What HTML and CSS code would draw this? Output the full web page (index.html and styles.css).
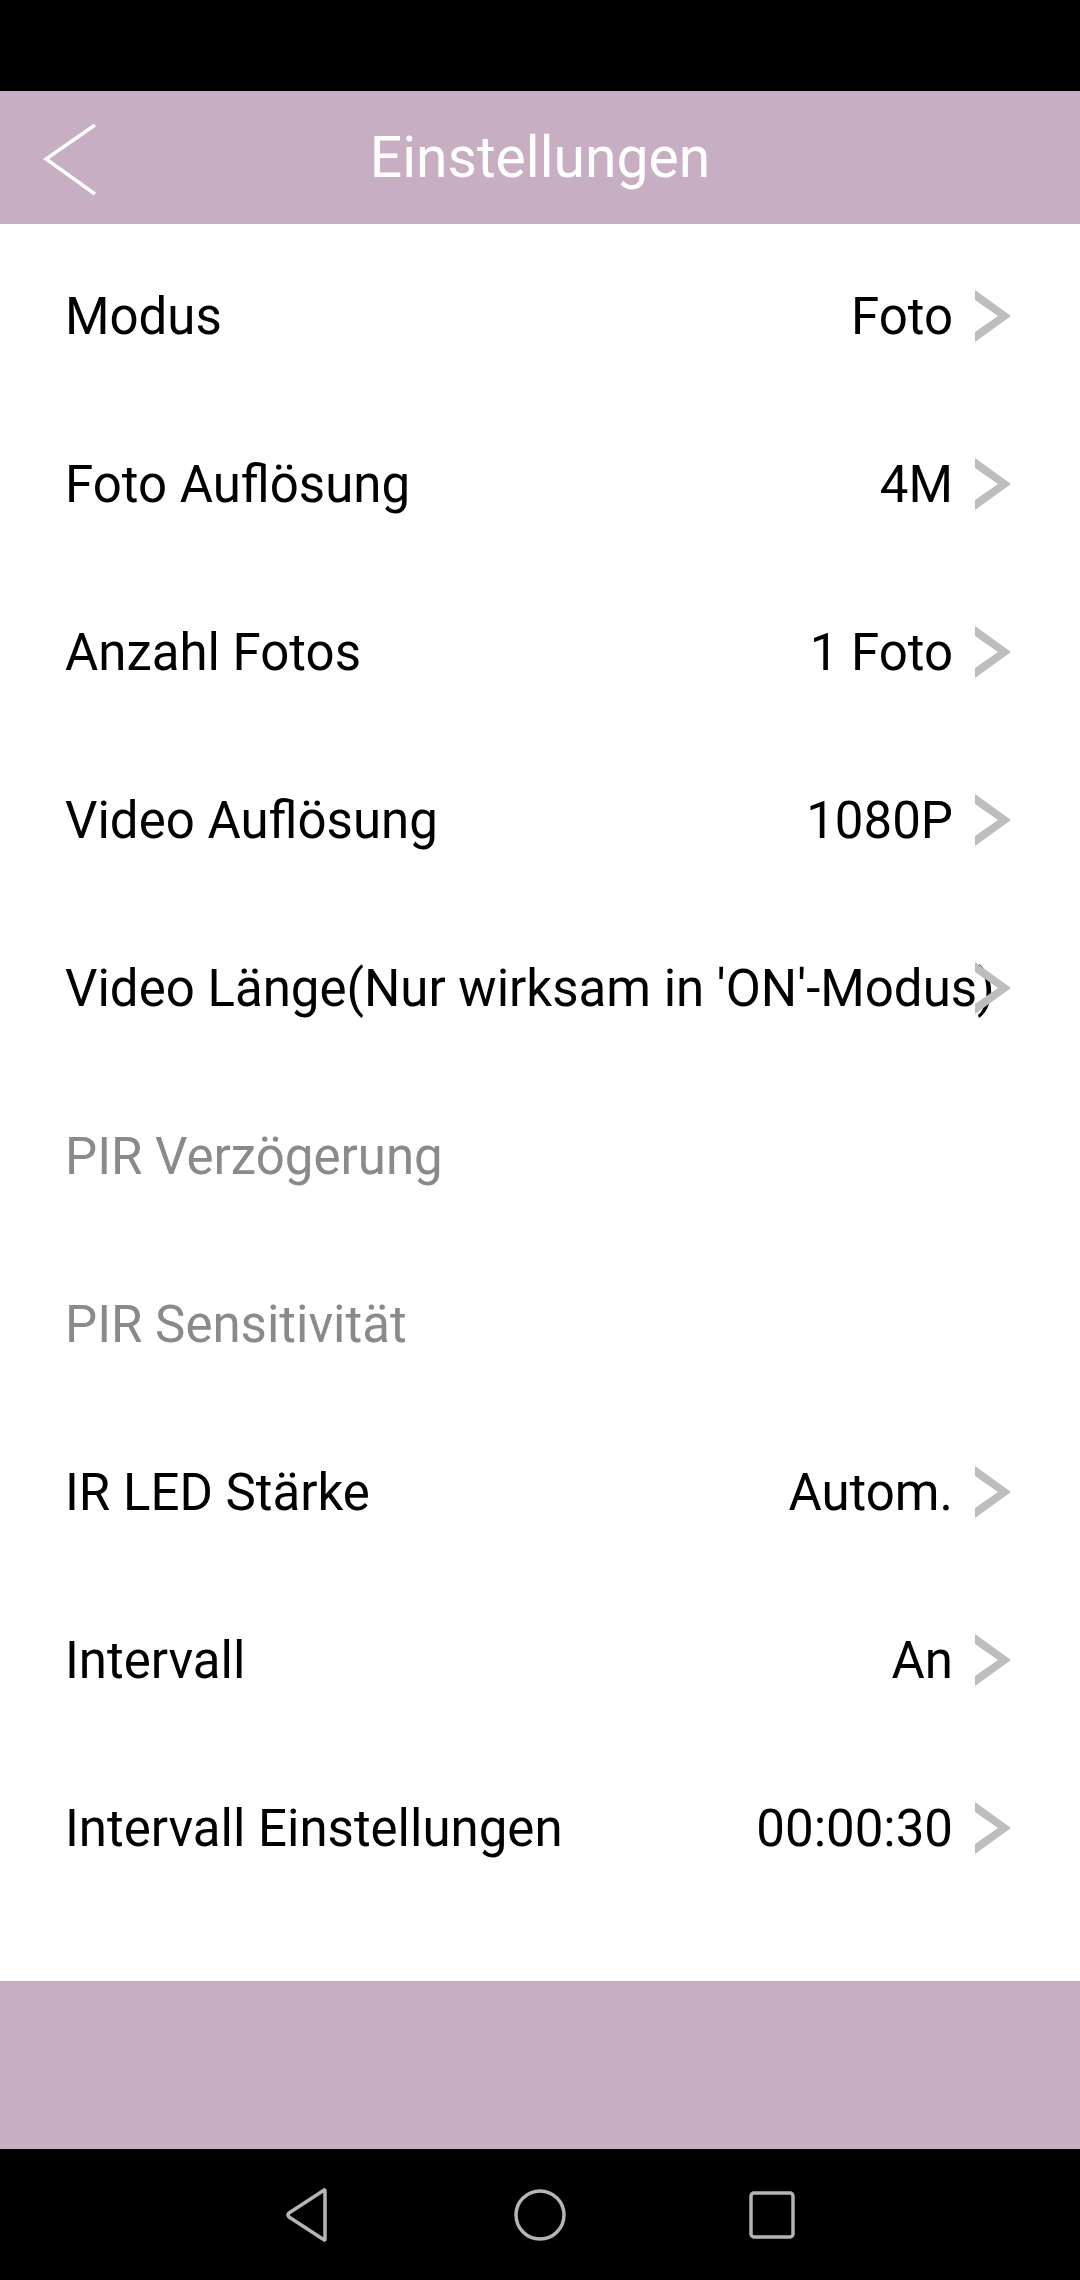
FILE: index.html
```html
<!DOCTYPE html>
<html lang="de">
<head>
    <meta charset="UTF-8">
    <meta name="viewport" content="width=device-width, initial-scale=1.0">
    <title>Einstellungen</title>
    <link rel="stylesheet" href="styles.css">
</head>
<body>
    <div class="status-bar"></div>

    <div class="app-bar">
        <svg class="back" width="60" height="80" viewBox="0 0 60 80">
            <polyline points="53,3 4,37 53,72" fill="none" stroke="#fff" stroke-width="3.5"/>
        </svg>
        <h1 class="title">Einstellungen</h1>
    </div>

    <div class="settings">
        <div class="row">
            <span class="label">Modus</span>
            <span class="value">Foto</span>
            <svg class="chevron" viewBox="0 0 36 52"><polygon points="0,0 36,26 0,52 0,42 23,26 0,10"/></svg>
        </div>
        <div class="row">
            <span class="label">Foto Auflösung</span>
            <span class="value">4M</span>
            <svg class="chevron" viewBox="0 0 36 52"><polygon points="0,0 36,26 0,52 0,42 23,26 0,10"/></svg>
        </div>
        <div class="row">
            <span class="label">Anzahl Fotos</span>
            <span class="value">1 Foto</span>
            <svg class="chevron" viewBox="0 0 36 52"><polygon points="0,0 36,26 0,52 0,42 23,26 0,10"/></svg>
        </div>
        <div class="row">
            <span class="label">Video Auflösung</span>
            <span class="value">1080P</span>
            <svg class="chevron" viewBox="0 0 36 52"><polygon points="0,0 36,26 0,52 0,42 23,26 0,10"/></svg>
        </div>
        <div class="row">
            <span class="label">Video Länge(Nur wirksam in 'ON'-Modus)</span>
            <span class="value"></span>
            <svg class="chevron" viewBox="0 0 36 52"><polygon points="0,0 36,26 0,52 0,42 23,26 0,10"/></svg>
        </div>
        <div class="row disabled">
            <span class="label">PIR Verzögerung</span>
        </div>
        <div class="row disabled">
            <span class="label">PIR Sensitivität</span>
        </div>
        <div class="row">
            <span class="label">IR LED Stärke</span>
            <span class="value">Autom.</span>
            <svg class="chevron" viewBox="0 0 36 52"><polygon points="0,0 36,26 0,52 0,42 23,26 0,10"/></svg>
        </div>
        <div class="row">
            <span class="label">Intervall</span>
            <span class="value">An</span>
            <svg class="chevron" viewBox="0 0 36 52"><polygon points="0,0 36,26 0,52 0,42 23,26 0,10"/></svg>
        </div>
        <div class="row">
            <span class="label">Intervall Einstellungen</span>
            <span class="value">00:00:30</span>
            <svg class="chevron" viewBox="0 0 36 52"><polygon points="0,0 36,26 0,52 0,42 23,26 0,10"/></svg>
        </div>
    </div>

    <div class="bottom-bar"></div>

    <div class="nav-bar">
        <div class="nav-slot">
            <svg width="46" height="54" viewBox="0 0 46 54">
                <path d="M40,3 L40,51 Q40,53 38.5,51.5 L4,29 Q2,27 4,25 L38.5,2.5 Q40,1 40,3 Z" fill="none" stroke="#b5b5b5" stroke-width="3.5" stroke-linejoin="round"/>
            </svg>
        </div>
        <div class="nav-slot">
            <svg width="54" height="54" viewBox="0 0 54 54">
                <circle cx="27" cy="27" r="24" fill="none" stroke="#b5b5b5" stroke-width="3.5"/>
            </svg>
        </div>
        <div class="nav-slot">
            <svg width="48" height="50" viewBox="0 0 48 50">
                <rect x="3" y="3" width="42" height="44" rx="3" fill="none" stroke="#b5b5b5" stroke-width="3.5"/>
            </svg>
        </div>
    </div>
</body>
</html>
```

FILE: styles.css
```css
body {
    margin: 0;
    height: 2280px;
    display: flex;
    flex-direction: column;
    font-family: Roboto, "Noto Sans", sans-serif;
    background-color: #fff;
}

.status-bar {
    height: 91px;
    background-color: #000;
}

.app-bar {
    height: 133px;
    background-color: #c7aec2;
    display: flex;
    align-items: center;
    justify-content: center;
    position: relative;
}

.back {
    position: absolute;
    left: 42px;
    top: 31px;
}

.title {
    margin: 0;
    font-size: 57px;
    font-weight: 400;
    color: #fff;
}

.settings {
    flex: 1;
    padding-top: 8px;
}

.row {
    height: 168px;
    display: flex;
    align-items: center;
    padding: 0 69px 0 65px;
    font-size: 51px;
    color: #000;
    white-space: nowrap;
}

.label {
    flex: 1;
    min-width: 0;
}

.value {
    margin-right: 22px;
}

.chevron {
    width: 36px;
    height: 52px;
    fill: #bdbdbd;
    flex-shrink: 0;
}

.disabled {
    color: #8a8a8a;
}

.bottom-bar {
    height: 168px;
    background-color: #c7aec2;
}

.nav-bar {
    height: 131px;
    background-color: #000;
    display: flex;
    justify-content: center;
    align-items: center;
    gap: 152px;
}

.nav-slot {
    width: 80px;
    display: flex;
    justify-content: center;
}
```
